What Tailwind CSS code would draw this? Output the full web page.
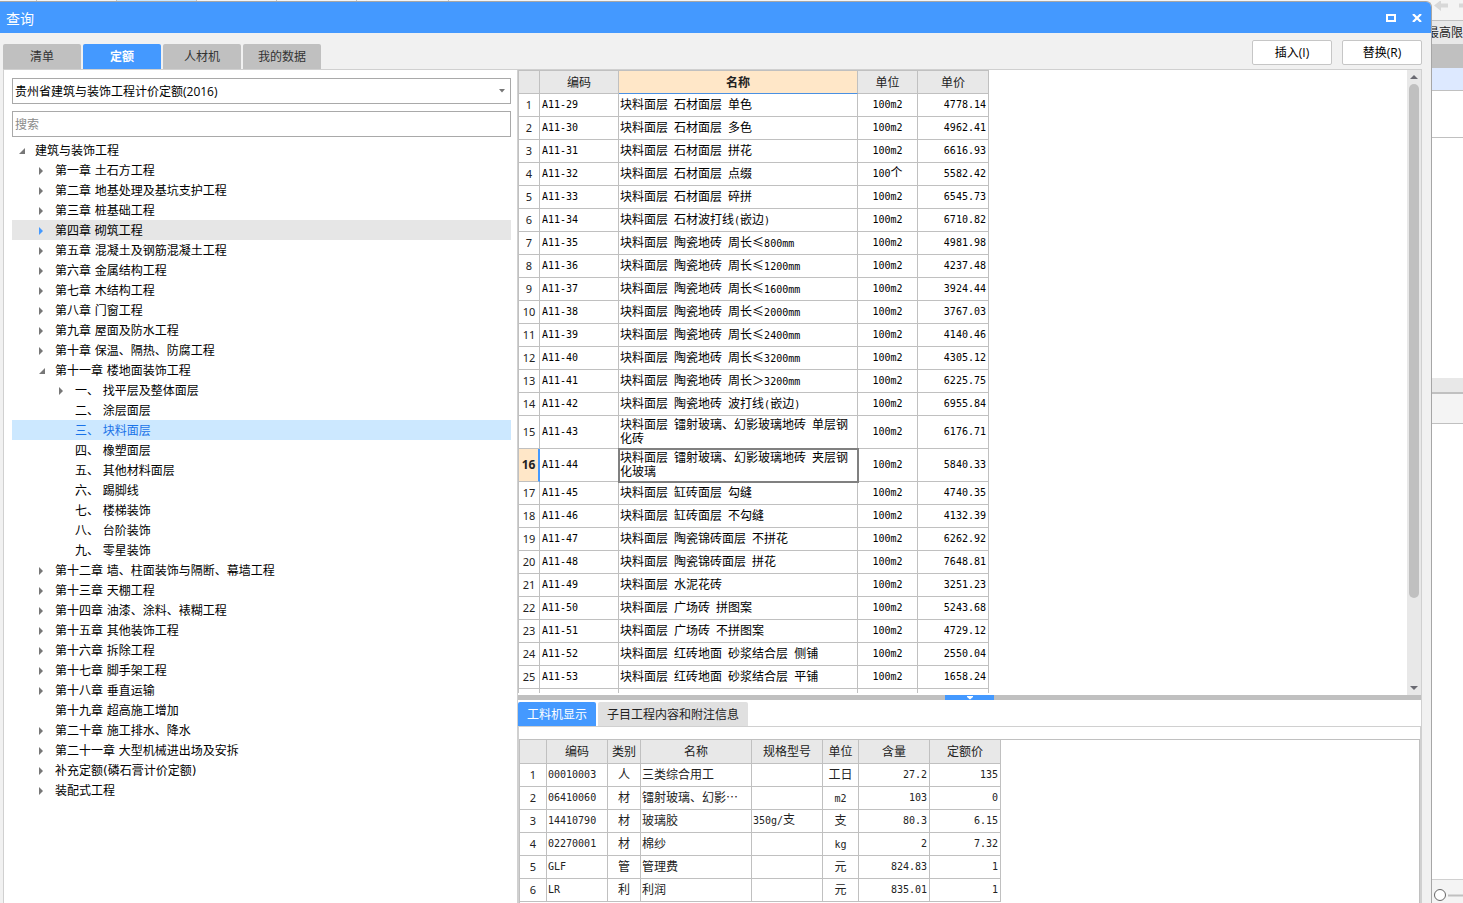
<!DOCTYPE html>
<html lang="zh-CN">
<head>
<meta charset="utf-8">
<title>查询</title>
<script src="https://cdn.jsdelivr.net/npm/@tailwindcss/browser@4"></script>
</head>
<body class="h-screen overflow-hidden flex flex-col bg-white text-xs text-black font-['DejaVu_Sans','Noto_Sans_CJK_SC',sans-serif]">

<div class="h-px shrink-0 flex bg-[#f4f4f4]" aria-hidden="true">
  <div class="w-[37px] border-r border-[#c0c0c0]"></div>
  <div class="w-20 border-r border-[#c0c0c0]"></div>
  <div class="w-20 border-r border-[#c0c0c0] bg-[#cce8ff]"></div>
  <div class="w-20 border-r border-[#c0c0c0]"></div>
  <div class="w-20 border-r border-[#c0c0c0]"></div>
  <div class="w-[92px] border-r border-[#c0c0c0]"></div>
</div>

<div class="flex-1 min-h-0 flex bg-[#f4f4f4]">
  <!-- Query dialog -->
  <section class="flex-1 min-w-0 flex flex-col bg-[#f1f1f1] border-t border-r border-[#a6a6a6] rounded-tr-md overflow-hidden" aria-label="查询">
    <header class="h-[31px] shrink-0 flex items-center bg-[#4499ff] text-white pl-1.5 pr-[5px]">
      <h1 class="flex-1 text-sm leading-5 pt-0.5">查询</h1>
      <button class="p-1 mr-2" aria-label="最大化"><svg width="10" height="8" viewBox="0 0 10 8" class="block"><path d="M1 1h8v6H1z" fill="none" stroke="#fff" stroke-width="2"/></svg></button>
      <button class="p-1" aria-label="关闭"><svg width="10" height="8" viewBox="0 0 10 8" class="block"><path d="M1 0l8 8M9 0L1 8" fill="none" stroke="#fff" stroke-width="2.200"/></svg></button>
    </header>

    <div class="h-9 shrink-0 flex items-end pl-[3px] pr-[9px]">
      <nav class="flex-1 flex gap-0.5 text-[#333]">
        <button class="w-[78px] h-[25px] rounded-t-xs bg-[#c0c0c0]">清单</button>
        <button class="w-[78px] h-[25px] rounded-t-xs bg-[#4499ff] text-white font-bold">定额</button>
        <button class="w-[78px] h-[25px] rounded-t-xs bg-[#c0c0c0]">人材机</button>
        <button class="w-[78px] h-[25px] rounded-t-xs bg-[#c0c0c0]">我的数据</button>
      </nav>
      <div class="flex gap-2.5 self-start pt-[7px] font-['Open_Sans','Noto_Sans_CJK_SC',sans-serif]">
        <button class="w-20 h-[25px] rounded-xs border border-[#c6c6c6] bg-white">插入(I)</button>
        <button class="w-20 h-[25px] rounded-xs border border-[#c6c6c6] bg-white">替换(R)</button>
      </div>
    </div>

    <div class="flex-1 min-h-0 flex ml-[3px] mr-[9px] border-t border-x border-[#d0d0d0] bg-white">
      <!-- Chapter tree -->
      <aside class="w-[513px] shrink-0 pl-2 pr-1.5 pt-2 flex flex-col">
        <div class="relative">
          <select aria-label="定额库" class="block w-full h-[26px] border border-[#a9a9a9] bg-white appearance-none pl-0.5 pr-5 pt-0.5 font-['Open_Sans','Noto_Sans_CJK_SC',sans-serif]"><option>贵州省建筑与装饰工程计价定额(2016)</option></select>
          <svg width="6" height="4" viewBox="0 0 6 4" class="absolute right-1.5 top-[11px] pointer-events-none"><path d="M0 0h6L3 3.5z" fill="#777"/></svg>
        </div>
        <input type="search" aria-label="搜索" placeholder="搜索" class="mt-[7px] block w-full h-[26px] border border-[#a9a9a9] bg-white pl-0.5 pt-0.5 placeholder:text-[#8a8a8a]">
        <ul id="tree" class="mt-[3px]"></ul>
      </aside>
      <div class="w-px shrink-0 bg-[#d0d0d0]"></div>

      <div class="flex-1 min-w-0 flex flex-col">
        <div class="flex-1 min-h-0 flex">
          <div class="flex-1 min-w-0 mb-0.5 overflow-hidden">
            <table class="w-[471px] table-fixed border-separate border-spacing-0 border-t border-l border-[#c0c0c0] font-['Noto_Sans_CJK_SC',sans-serif]">
              <colgroup><col class="w-[21px]"><col class="w-[79px]"><col class="w-[239px]"><col class="w-[60px]"><col class="w-[71px]"></colgroup>
              <thead>
                <tr class="h-[23px] bg-[#e8e8e8] text-[#222]">
                  <th class="border-r border-b border-[#c0c0c0]"></th>
                  <th class="border-r border-b border-[#c0c0c0] p-0 leading-4 font-normal">编码</th>
                  <th class="border-r border-b border-r-[#c0c0c0] border-b-[#4a90e2] bg-[#ffe7c8] p-0 leading-4 font-bold">名称</th>
                  <th class="border-r border-b border-[#c0c0c0] p-0 leading-4 font-normal">单位</th>
                  <th class="border-r border-b border-[#c0c0c0] p-0 leading-4 font-normal">单价</th>
                </tr>
              </thead>
              <tbody id="quota"></tbody>
            </table>
          </div>
          <div class="w-3.5 shrink-0 bg-[#e8e8e8] flex flex-col items-center" aria-hidden="true">
            <svg width="8" height="4" viewBox="0 0 8 4" class="mt-[5px] shrink-0"><path d="M4 0l4 4H0z" fill="#6a6a72"/></svg>
            <div class="w-2.5 mt-[5px] rounded-full bg-[#c0c0c0] grow-[514]"></div>
            <div class="grow-[88]"></div>
            <svg width="8" height="4" viewBox="0 0 8 4" class="mb-[5px] shrink-0"><path d="M0 0h8L4 4z" fill="#6a6a72"/></svg>
          </div>
        </div>

        <div class="h-[5px] shrink-0 bg-[#c0c0c0] flex justify-center">
          <button class="w-[49px] bg-[#4499ff] flex justify-center items-start" aria-label="收起"><svg width="6" height="4" viewBox="0 0 6 4" class="mt-px"><path d="M0 0h6v1L3 3.500 0 1z" fill="#fff"/></svg></button>
        </div>

        <div class="h-[203px] shrink-0 flex flex-col pt-0.5">
          <nav class="flex gap-0.5 border-b border-[#d0d0d0] text-[#222]">
            <button class="w-[78px] h-6 pt-0.5 rounded-t-xs bg-[#4499ff] text-white">工料机显示</button>
            <button class="w-[150px] h-6 pt-0.5 rounded-t-xs bg-[#e0e0e0]">子目工程内容和附注信息</button>
          </nav>
          <div class="flex-1 min-h-0 flex flex-col pt-3 border-x border-[#d0d0d0]">
            <div class="flex-1 min-h-0 border-t border-x border-[#c0c0c0] overflow-hidden">
              <table class="w-[481px] table-fixed border-separate border-spacing-0 text-[#222] font-['Noto_Sans_CJK_SC',sans-serif]">
                <colgroup><col class="w-[27px]"><col class="w-[61px]"><col class="w-[33px]"><col class="w-[111px]"><col class="w-[71px]"><col class="w-[36px]"><col class="w-[71px]"><col class="w-[71px]"></colgroup>
                <thead>
                  <tr class="h-6 bg-[#e8e8e8]">
                    <th class="border-r border-b border-[#c0c0c0]"></th>
                    <th class="border-r border-b border-[#c0c0c0] p-0 pb-0.5 leading-4 font-normal">编码</th>
                    <th class="border-r border-b border-[#c0c0c0] p-0 pb-0.5 leading-4 font-normal">类别</th>
                    <th class="border-r border-b border-[#c0c0c0] p-0 pb-0.5 leading-4 font-normal">名称</th>
                    <th class="border-r border-b border-[#c0c0c0] p-0 pb-0.5 leading-4 font-normal">规格型号</th>
                    <th class="border-r border-b border-[#c0c0c0] p-0 pb-0.5 leading-4 font-normal">单位</th>
                    <th class="border-r border-b border-[#c0c0c0] p-0 pb-0.5 leading-4 font-normal">含量</th>
                    <th class="border-r border-b border-[#c0c0c0] p-0 pb-0.5 leading-4 font-normal">定额价</th>
                  </tr>
                </thead>
                <tbody id="resources"></tbody>
              </table>
            </div>
          </div>
        </div>
      </div>
    </div>
  </section>

  <!-- Main window visible beside the dialog -->
  <div class="w-[31px] shrink-0 flex flex-col overflow-hidden bg-white" aria-hidden="true">
    <div class="h-5 shrink-0 bg-[#f4f4f4] border-b border-[#c0c0c0]"><svg width="31" height="10" viewBox="0 0 31 10"><path d="M2 4.500L9 -1v3.500h7v4H9V10zM27 2.500h4v4h-4z" fill="#d8d8d8"/></svg></div>
    <div class="h-[23px] shrink-0 bg-[#e8e8e8] flex justify-end items-center whitespace-nowrap leading-4 text-[#222]">最高限</div>
    <div class="h-6 shrink-0 bg-[#c0c0c0]"></div>
    <div class="h-[23px] shrink-0 bg-[#dde9ff] border-b border-[#c0c0c0]"></div>
    <div class="h-[47px] shrink-0 border-b border-[#c0c0c0]"></div>
    <div class="h-60 shrink-0"></div>
    <div class="h-4 shrink-0 bg-[#e8e8e8] border-b-2 border-[#c0c0c0]"></div>
    <div class="h-[30px] shrink-0 bg-[#f4f4f4] border-b border-[#c0c0c0]"></div>
    <div class="flex-1"></div>
    <div class="h-6 shrink-0 bg-[#f4f4f4] border-t border-[#d0d0d0]"><svg width="31" height="23" viewBox="0 0 31 23"><circle cx="8" cy="15" r="5.500" fill="#fff" stroke="#666"/><path d="M16 15.500h15" stroke="#c0c0c0" stroke-width="2"/></svg></div>
  </div>
</div>

<script>
// Chapter tree: [depth, state, label, highlight]
const chapters = [
  [0,'open','建筑与装饰工程'],[1,'closed','第一章 土石方工程'],[1,'closed','第二章 地基处理及基坑支护工程'],[1,'closed','第三章 桩基础工程'],
  [1,'closed','第四章 砌筑工程','hover'],[1,'closed','第五章 混凝土及钢筋混凝土工程'],[1,'closed','第六章 金属结构工程'],[1,'closed','第七章 木结构工程'],
  [1,'closed','第八章 门窗工程'],[1,'closed','第九章 屋面及防水工程'],[1,'closed','第十章 保温、隔热、防腐工程'],[1,'open','第十一章 楼地面装饰工程'],
  [2,'closed','一、 找平层及整体面层'],[2,'','二、 涂层面层'],[2,'','三、 块料面层','selected'],[2,'','四、 橡塑面层'],[2,'','五、 其他材料面层'],
  [2,'','六、 踢脚线'],[2,'','七、 楼梯装饰'],[2,'','八、 台阶装饰'],[2,'','九、 零星装饰'],
  [1,'closed','第十二章 墙、柱面装饰与隔断、幕墙工程'],[1,'closed','第十三章 天棚工程'],[1,'closed','第十四章 油漆、涂料、裱糊工程'],
  [1,'closed','第十五章 其他装饰工程'],[1,'closed','第十六章 拆除工程'],[1,'closed','第十七章 脚手架工程'],[1,'closed','第十八章 垂直运输'],
  [1,'','第十九章 超高施工增加'],[1,'closed','第二十章 施工排水、降水'],[1,'closed','第二十一章 大型机械进出场及安拆'],
  [1,'closed','补充定额(磷石膏计价定额)'],[1,'closed','装配式工程']
];
const indent = ['pl-[7px]', 'pl-[27px]', 'pl-[47px]'];
const rowTone = { hover: 'bg-[#e6e6e6]', selected: 'bg-[#cce8ff] text-[#1a73e8]' };
const marks = {
  open: '<path d="M6 1v6H0z"/>',
  closed: '<path d="M0 0v8l4-4z"/>'
};
document.getElementById('tree').innerHTML = chapters.map(([d, s, t, h]) =>
  `<li><button class="w-full h-5 pt-0.5 flex items-center text-left leading-4 ${indent[d]} ${rowTone[h] || ''}"><svg width="8" height="8" viewBox="0 0 8 8" class="mr-2 shrink-0 ${h === 'hover' ? 'fill-[#4499ff]' : 'fill-[#777]'}"><g>${marks[s] || ''}</g></svg>${t}</button></li>`).join('');

// Latin runs in grid cells take the half-width face
const grid = s => String(s).replace(/[\x20-\x7e]+/g, m => `<span class="font-['DejaVu_Sans_Mono',monospace] text-[10px] leading-none">${m}</span>`);

const items = [
  ['块料面层 石材面层 单色','4778.14'],['块料面层 石材面层 多色','4962.41'],['块料面层 石材面层 拼花','6616.93'],['块料面层 石材面层 点缀','5582.42','100个'],
  ['块料面层 石材面层 碎拼','6545.73'],['块料面层 石材波打线(嵌边)','6710.82'],['块料面层 陶瓷地砖 周长≤800mm','4981.98'],['块料面层 陶瓷地砖 周长≤1200mm','4237.48'],
  ['块料面层 陶瓷地砖 周长≤1600mm','3924.44'],['块料面层 陶瓷地砖 周长≤2000mm','3767.03'],['块料面层 陶瓷地砖 周长≤2400mm','4140.46'],['块料面层 陶瓷地砖 周长≤3200mm','4305.12'],
  ['块料面层 陶瓷地砖 周长＞3200mm','6225.75'],['块料面层 陶瓷地砖 波打线(嵌边)','6955.84'],['块料面层 镭射玻璃、幻影玻璃地砖 单层钢化砖','6176.71'],
  ['块料面层 镭射玻璃、幻影玻璃地砖 夹层钢化玻璃','5840.33'],['块料面层 缸砖面层 勾缝','4740.35'],['块料面层 缸砖面层 不勾缝','4132.39'],
  ['块料面层 陶瓷锦砖面层 不拼花','6262.92'],['块料面层 陶瓷锦砖面层 拼花','7648.81'],['块料面层 水泥花砖','3251.23'],['块料面层 广场砖 拼图案','5243.68'],
  ['块料面层 广场砖 不拼图案','4729.12'],['块料面层 红砖地面 砂浆结合层 侧铺','2550.04'],['块料面层 红砖地面 砂浆结合层 平铺','1658.24']
];
const emptyRow = '<tr class="h-[23px]">' + '<td class="border-r border-b border-[#c0c0c0] p-0"></td>'.repeat(5) + '</tr>';
document.getElementById('quota').innerHTML = items.map(([name, price, unit], i) => {
  const current = i === 15, tall = i === 14 || i === 15;
  const num = current ? 'bg-[#ffe7c8] border-r-2 border-r-[#4499ff] font-bold text-xs' : 'border-r border-r-[#c0c0c0] text-[11px]';
  const cell = current ? 'outline-2 -outline-offset-1 outline-[#808080]' : '';
  return `<tr class="${tall ? 'h-[33px]' : 'h-[23px]'}">
    <td class="border-b border-b-[#c0c0c0] p-0 text-center leading-4 text-[#222] font-['Noto_Sans',sans-serif] ${num}">${i + 1}</td>
    <td class="border-r border-b border-[#c0c0c0] p-0 pl-0.5 pb-1 leading-3.5">${grid('A11-' + (29 + i))}</td>
    <td class="border-r border-b border-[#c0c0c0] p-0 pl-px pb-0.5 leading-3.5 break-all ${cell}">${grid(name)}</td>
    <td class="border-r border-b border-[#c0c0c0] p-0 pb-1 text-center leading-3.5">${grid(unit || '100m2')}</td>
    <td class="border-r border-b border-[#c0c0c0] p-0 pr-0.5 pb-1 text-right leading-3.5">${grid(price)}</td></tr>`;
}).join('') + emptyRow;

const resources = [
  ['00010003','人','三类综合用工','','工日','27.2','135'],
  ['06410060','材','镭射玻璃、幻影…','','m2','103','0'],
  ['14410790','材','玻璃胶','350g/支','支','80.3','6.15'],
  ['02270001','材','棉纱','','kg','2','7.32'],
  ['GLF','管','管理费','','元','824.83','1'],
  ['LR','利','利润','','元','835.01','1']
];
const align = ['pl-px pb-1', 'pb-0.5 text-center', 'pl-px pb-0.5', 'pl-px pb-1', 'pb-0.5 text-center', 'pr-0.5 pb-1 text-right', 'pr-0.5 pb-1 text-right'];
document.getElementById('resources').innerHTML = resources.map((r, i) =>
  `<tr class="h-[23px]"><td class="border-r border-b border-[#c0c0c0] p-0 text-center leading-4 text-[11px] font-['Noto_Sans',sans-serif]">${i + 1}</td>` +
  r.map((c, k) => `<td class="border-r border-b border-[#c0c0c0] p-0 leading-3.5 whitespace-nowrap ${align[k]}">${grid(c)}</td>`).join('') + '</tr>').join('');
</script>
</body>
</html>
